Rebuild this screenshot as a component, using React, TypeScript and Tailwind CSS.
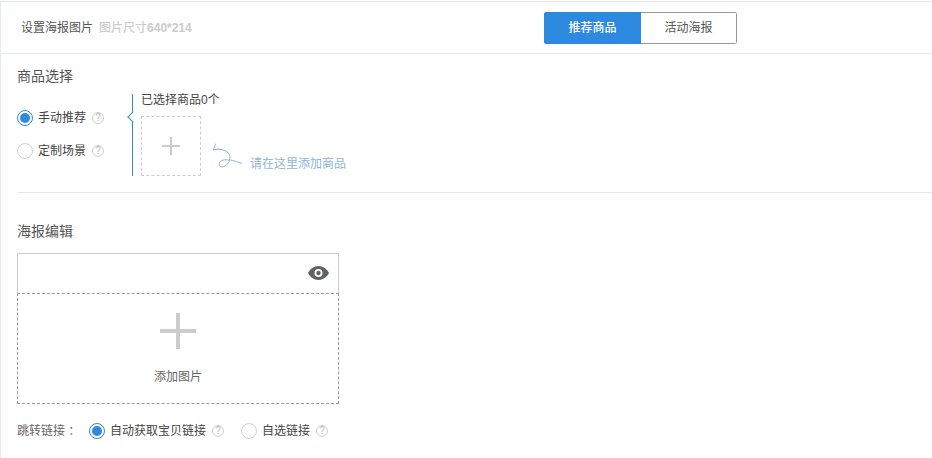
const F = '"Liberation Sans", "Noto Sans CJK SC", sans-serif';

function Help({ className = "" }: { className?: string }) {
  return (
    <span className={`flex h-3 w-3 shrink-0 items-center justify-center rounded-full border border-[#cfcfcf] text-[10px] leading-none text-[#bcbcbc] ${className}`}>
      ?
    </span>
  );
}

function Radio({ checked, className = "" }: { checked?: boolean; className?: string }) {
  return checked ? (
    <span className={`flex h-4 w-4 shrink-0 items-center justify-center rounded-full border border-[#2e8ae0] bg-white ${className}`}>
      <span className="h-2.5 w-2.5 rounded-full bg-[#2e8ae0]" />
    </span>
  ) : (
    <span className={`h-4 w-4 shrink-0 rounded-full border border-[#d0d0d0] bg-white ${className}`} />
  );
}

export default function App() {
  return (
    <div className="h-[458px] w-[932px] overflow-hidden bg-white pt-px" style={{ fontFamily: F }}>
      <div className="h-[457px] border-t border-l border-[#e3e9f5]">
        {/* header */}
        <div className="flex h-[52px] items-center border-b border-[#e3e9f5] pl-5">
          <span className="text-xs leading-4 text-[#555]">设置海报图片</span>
          <span className="ml-1.5 w-[445px] text-xs leading-4 font-medium text-[#ccc]">
            图片尺寸<span className="font-bold">640*214</span>
          </span>
          <div className="mt-px flex h-8 w-[193px] overflow-hidden rounded-[2px] text-xs">
            <span className="flex w-[97px] items-center justify-center bg-[#2e8ae0] font-medium text-white">推荐商品</span>
            <span className="flex flex-1 items-center justify-center rounded-r-[2px] border border-l-0 border-[#999] text-[#555]">活动海报</span>
          </div>
        </div>

        {/* product select */}
        <div className="ml-4 flex h-[139px] flex-col border-b border-[#e3e9f5]">
          <h2 className="mt-3 h-5 text-[14px] leading-5 font-normal text-[#555]">商品选择</h2>
          <div className="mt-2 flex">
            <div className="flex w-[115px] flex-col gap-[17px] pt-4">
              <label className="flex h-4 items-center">
                <Radio checked />
                <span className="ml-[5px] text-xs text-[#444]">手动推荐</span>
                <Help className="ml-1.5" />
              </label>
              <label className="flex h-4 items-center">
                <Radio />
                <span className="ml-[5px] text-xs text-[#444]">定制场景</span>
                <Help className="ml-1.5" />
              </label>
            </div>
            <div className="relative h-[82px] border-l border-[#2e8ae0] pl-2">
              <span className="absolute top-[19px] -left-[4px] h-2 w-2 rotate-45 border-b border-l border-[#2e8ae0] bg-white" />
              <p className="h-[22px] text-xs leading-3 text-[#444]">已选择商品0个</p>
              <div className="flex items-start">
                <div className="flex h-[60px] w-[60px] items-center justify-center border border-dashed border-[#ccc]">
                  <svg width="18" height="18" viewBox="0 0 18 18">
                    <path d="M8 0h2v18H8zM0 8h18v2H0z" fill="#ccc" />
                  </svg>
                </div>
                <svg width="30" height="27" viewBox="0 0 30 27" fill="none" className="mt-[27px] ml-3">
                  <path d="M2.500 1 .5 7l4.500-1M.5 7C6 5 17 7 17 14 17 19 13 24 9 24 5.500 24 5 19 9 17.500 14 15.500 22 18 28.700 20.300" stroke="#8fb4dc" strokeWidth="1" strokeLinecap="round" strokeLinejoin="round" />
                </svg>
                <span className="mt-10 ml-[7px] text-xs leading-4 text-[#8fb4dc]">请在这里添加商品</span>
              </div>
            </div>
          </div>
        </div>

        {/* poster */}
        <div className="pl-4">
          <h2 className="mt-7 h-5 text-[14px] leading-5 font-normal text-[#555]">海报编辑</h2>
          <div className="mt-3 w-[322px]">
            <div className="flex h-10 items-center justify-end border border-b-0 border-[#ccc] pr-[9px]">
              <svg width="21" height="14" viewBox="0 0 21 14" className="-mt-px">
                <path fillRule="evenodd" d="M10.500 0C15 0 19 3 21 7c-2 4-6 7-10.500 7S2 11 0 7c2-4 6-7 10.500-7Zm0 3a4 4 0 1 0 0 8 4 4 0 0 0 0-8Z" fill="#5f6368" />
                <circle cx="10.500" cy="7" r="2.200" fill="#5f6368" />
              </svg>
            </div>
            <div className="flex h-[111px] flex-col items-center border border-dashed border-[#999]">
              <svg width="36" height="36" viewBox="0 0 36 36" className="mt-[19px]">
                <path d="M16 0h4v36h-4zM0 16h36v4H0z" fill="#ccc" />
              </svg>
              <span className="mt-5 text-xs leading-4 text-[#666]">添加图片</span>
            </div>
          </div>
          <div className="mt-[19px] flex h-4 items-center text-xs text-[#444]">
            <span className="w-[72px] text-[#666]">跳转链接 ：</span>
            <Radio checked />
            <span className="ml-[5px]">自动获取宝贝链接</span>
            <Help className="ml-1.5" />
            <Radio className="ml-[17px]" />
            <span className="ml-[5px]">自选链接</span>
            <Help className="ml-1.5" />
          </div>
        </div>
      </div>
    </div>
  );
}
